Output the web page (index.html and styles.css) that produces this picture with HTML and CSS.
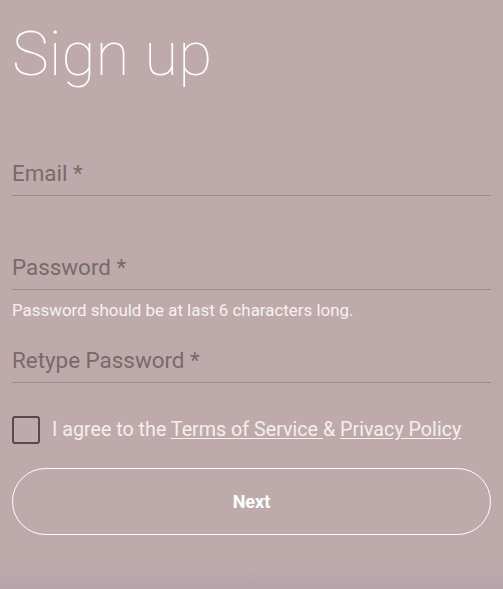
FILE: index.html
```html
<!DOCTYPE html>
<html lang="en">
<head>
<meta charset="utf-8">
<title>Sign up</title>
<link rel="stylesheet" href="styles.css">
</head>
<body>
<main class="signup">
  <h1 class="title">Sign up</h1>
  <div class="field field-email">
    <label class="label">Email *</label>
  </div>
  <div class="field field-password">
    <label class="label">Password *</label>
  </div>
  <p class="helper">Password should be at last 6 characters long.</p>
  <div class="field field-retype">
    <label class="label">Retype Password *</label>
  </div>
  <div class="agree">
    <span class="checkbox"></span>
    <span class="agree-text">I agree to the <a class="link" href="#">Terms of Service </a>&amp; <a class="link" href="#">Privacy Policy</a></span>
  </div>
  <button class="next" type="button">Next</button>
</main>
</body>
</html>
```
FILE: styles.css
```css
html {
  background: linear-gradient(to bottom, #bfaaab calc(100% - 20px), #b4a3a9 100%);
  min-height: 100%;
}
body {
  margin: 0;
  min-height: 589px;
  font-family: Roboto, "Noto Sans", "Liberation Sans", sans-serif;
}
.signup {
  padding: 18px 12px 0 12px;
  display: flex;
  flex-direction: column;
}
.title {
  margin: 0;
  font-size: 62px;
  font-weight: 100;
  line-height: 72px;
  color: #ffffff;
  letter-spacing: 0;
}
.field {
  border-bottom: 1px solid #9d8b8c;
  padding-bottom: 9px;
}
.label {
  display: block;
  font-size: 22.4px;
  line-height: 26px;
  color: #776a6b;
}
.field-email {
  margin-top: 70px;
}
.field-password {
  margin-top: 58px;
}
.helper {
  margin: 10px 0 0 0;
  font-size: 16.9px;
  line-height: 20px;
  color: #f7f1f1;
}
.field-retype {
  margin-top: 27px;
}
.agree {
  margin-top: 33px;
  display: flex;
  align-items: center;
  gap: 12px;
}
.checkbox {
  width: 24px;
  height: 24px;
  border: 2px solid #564b4b;
  border-radius: 3px;
  flex: none;
}
.agree-text {
  font-size: 19.7px;
  line-height: 24px;
  color: #f4eeee;
}
.link {
  color: #f4eeee;
  text-decoration: underline;
  text-underline-offset: 2px;
}
.next {
  margin-top: 24px;
  height: 67px;
  border: 1px solid #ffffff;
  border-radius: 34px;
  background: transparent;
  color: #ffffff;
  font-family: Roboto, "Noto Sans", "Liberation Sans", sans-serif;
  font-size: 18px;
  font-weight: 700;
  cursor: pointer;
}
```
